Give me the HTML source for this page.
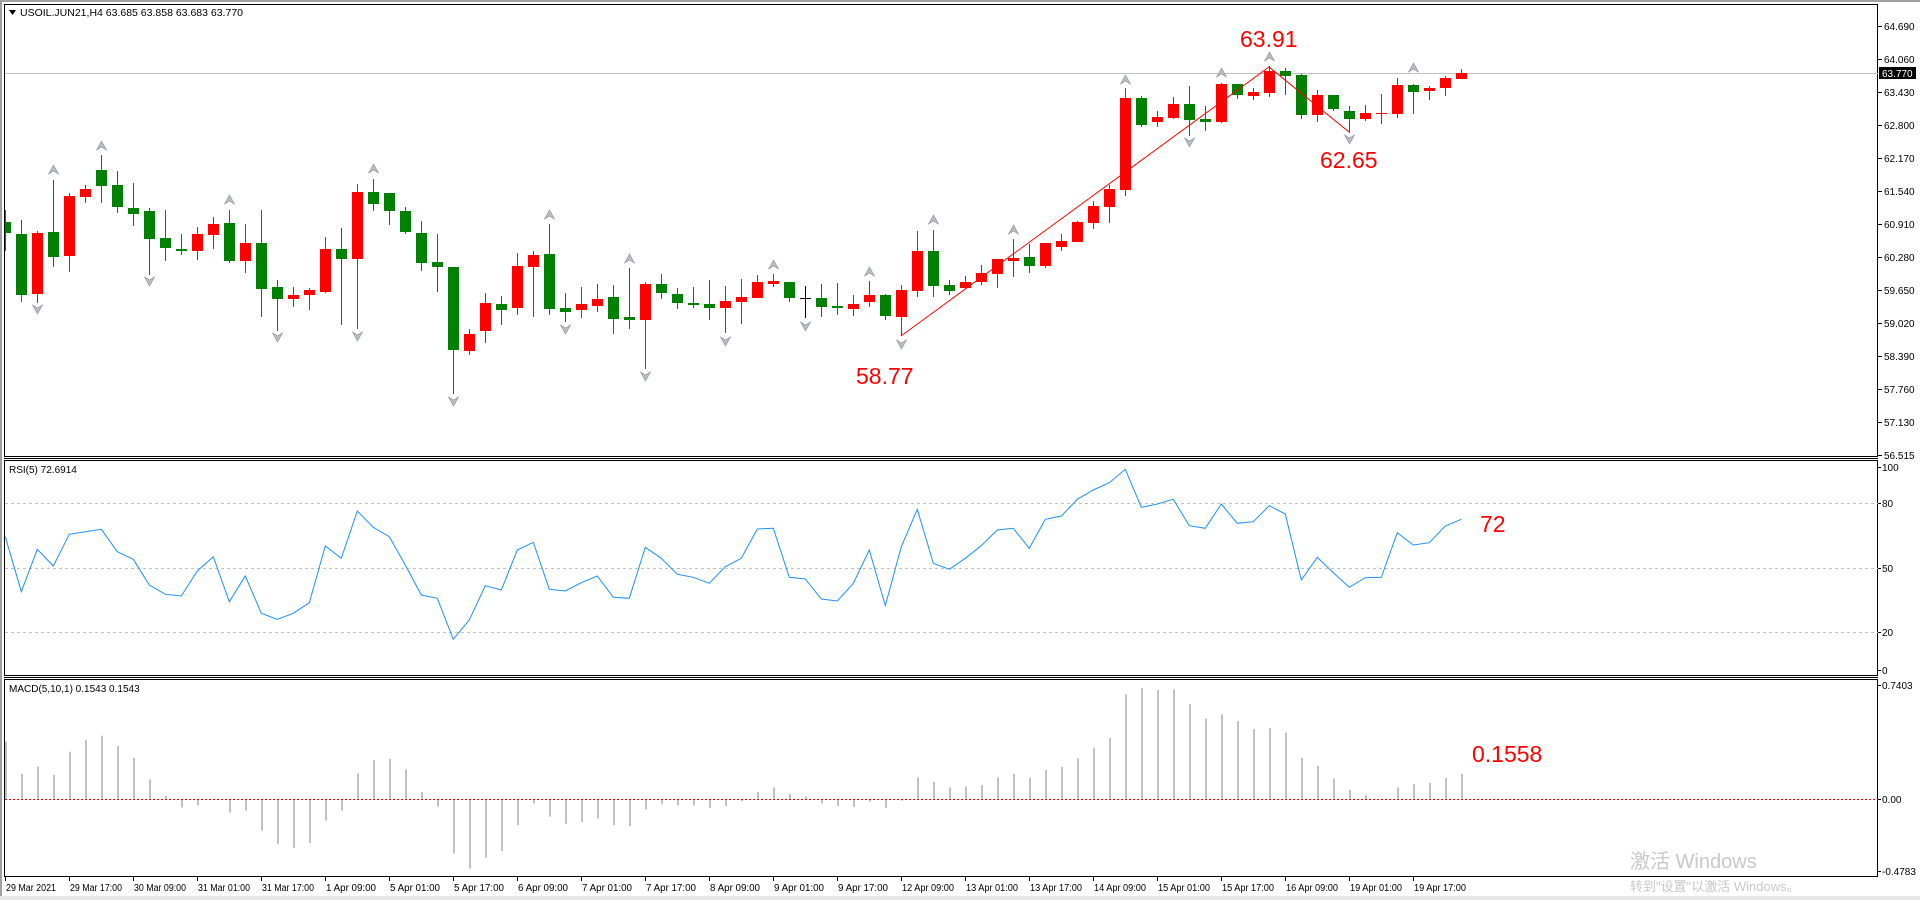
<!DOCTYPE html>
<html><head><meta charset="utf-8"><style>
html,body{margin:0;padding:0;background:#fff;width:1920px;height:900px;overflow:hidden}
svg{display:block}
text{font-family:"Liberation Sans","Noto Sans CJK SC",sans-serif}
</style></head><body>
<svg id="s" width="1920" height="900" viewBox="0 0 1920 900" xmlns="http://www.w3.org/2000/svg">
<rect x="0" y="0" width="1920" height="900" fill="#fff"/>
<rect x="0" y="0" width="1920" height="2" fill="#a0a0a0"/>
<rect x="0" y="0" width="2" height="900" fill="#a0a0a0"/>
<rect x="0" y="896" width="1920" height="4" fill="#e6e6e6"/>
<!-- main frame -->
<rect x="4.5" y="4.5" width="1873" height="452" fill="none" stroke="#000" stroke-width="1"/>
<line x1="4" y1="458.5" x2="1878" y2="458.5" stroke="#000"/>
<rect x="4.5" y="460.5" width="1873" height="215" fill="none" stroke="#000"/>
<line x1="4" y1="677.5" x2="1878" y2="677.5" stroke="#000"/>
<rect x="4.5" y="679.5" width="1873" height="197" fill="none" stroke="#000"/>
<g id="g"></g>
<!-- title -->
<polygon points="9,10 16,10 12.5,15" fill="#000"/>
<text x="20" y="16" font-size="10.5" fill="#000">USOIL.JUN21,H4  63.685 63.858 63.683 63.770</text>
<text x="9" y="473" font-size="10" fill="#000">RSI(5) 72.6914</text>
<text x="9" y="692" font-size="10" fill="#000">MACD(5,10,1) 0.1543 0.1543</text>
<!-- big labels -->
<g fill="#ff0000" font-size="23">
<text x="1240" y="47">63.91</text>
<text x="1320" y="168">62.65</text>
<text x="856" y="384">58.77</text>
<text x="1480" y="532">72</text>
<text x="1472" y="762">0.1558</text>
</g>
<!-- watermark -->
<text x="1630" y="868" font-size="20" fill="#c8c8c8">激活 Windows</text>
<text x="1630" y="891" font-size="13" fill="#c8c8c8">转到"设置"以激活 Windows。</text>
</svg>
<script>
var NS="http://www.w3.org/2000/svg",g=document.getElementById("g");
function el(n,a,t){var e=document.createElementNS(NS,n);for(var k in a)e.setAttribute(k,a[k]);if(t!==undefined)e.textContent=t;g.appendChild(e);return e;}
function X(k){return 5.3+16*k;}
// price line
el("line",{x1:5,y1:73.5,x2:1878,y2:73.5,stroke:"#c0c0c0"});
// price axis
var pl=["64.690","64.060","63.430","62.800","62.170","61.540","60.910","60.280","59.650","59.020","58.390","57.760","57.130","56.515"];
for(var i=0;i<pl.length;i++){var y=26+33*i;if(i==13)y=455;
el("line",{x1:1878,y1:y+0.5,x2:1882,y2:y+0.5,stroke:"#000"});
el("text",{x:1884,y:y+4,"font-size":"10",fill:"#000"},pl[i]);}
el("rect",{x:1879,y:67,width:37,height:12,fill:"#000"});
el("text",{x:1882,y:77,"font-size":"10",fill:"#fff"},"63.770");
// RSI axis
[[100,467],[80,503],[50,568],[20,632],[0,670]].forEach(function(a){el("text",{x:1882,y:a[1]+4,"font-size":"10",fill:"#000"},a[0]);el("line",{x1:1878,y1:a[1]+.5,x2:1881,y2:a[1]+.5,stroke:"#000"});});
[503,568,632].forEach(function(y){el("line",{x1:5,y1:y+.5,x2:1878,y2:y+.5,stroke:"#c0c0c0","stroke-dasharray":"3,3"});});
// MACD axis
[["0.7403",685],["0.00",799],["-0.4783",871]].forEach(function(a){el("text",{x:1882,y:a[1]+4,"font-size":"10",fill:"#000"},a[0]);el("line",{x1:1878,y1:a[1]+.5,x2:1881,y2:a[1]+.5,stroke:"#000"});});
// candles [k,wt,bt,bb,wb,c]
var C=[[0,210,222,233,251,"g"],[1,220,234,295,302,"g"],[2,231,233,294,303,"r"],[3,180,232,257,267,"g"],[4,193,196,256,272,"r"],[5,185,189,197,203,"r"],[6,155,170,186,203,"g"],[7,171,185,207,213,"g"],[8,183,208,214,226,"g"],[9,208,211,239,275,"g"],[10,210,238,248,261,"g"],[11,234,249,251,255,"g"],[12,227,234,251,260,"r"],[13,217,224,235,249,"r"],[14,210,223,261,263,"g"],[15,224,243,261,273,"r"],[16,210,243,289,317,"g"],[17,280,287,299,331,"g"],[18,287,295,299,307,"r"],[19,288,290,295,310,"r"],[20,237,249,292,293,"r"],[21,228,249,259,325,"g"],[22,184,192,259,329,"r"],[23,179,192,204,211,"g"],[24,193,193,211,225,"g"],[25,207,211,232,234,"g"],[26,221,233,263,271,"g"],[27,234,262,267,292,"g"],[28,267,267,350,394,"g"],[29,329,334,351,355,"r"],
[30,293,303,331,343,"r"],[31,296,304,310,325,"g"],[32,253,266,308,315,"r"],[33,251,255,267,317,"r"],[34,224,254,309,315,"g"],[35,293,308,312,322,"g"],[36,287,304,310,318,"r"],[37,284,299,306,312,"r"],[38,285,297,319,334,"g"],[39,268,317,320,329,"g"],[40,282,284,320,369,"r"],[41,274,284,293,299,"g"],[42,288,294,303,309,"g"],[43,287,303,305,308,"g"],[44,280,304,308,320,"g"],[45,286,301,308,333,"r"],[46,279,297,302,324,"r"],[47,275,282,298,298,"r"],[48,274,281,284,287,"r"],[49,282,282,298,302,"g"],[50,286,298,299,318,"k"],[51,284,298,307,317,"g"],[52,283,306,308,315,"g"],[53,295,304,309,316,"r"],[54,281,295,302,307,"r"],[55,294,295,316,320,"g"],[56,285,290,317,336,"r"],[57,231,251,291,297,"r"],[58,230,251,286,297,"g"],[59,280,285,291,295,"g"],
[60,276,282,288,289,"r"],[61,265,273,282,285,"r"],[62,259,259,274,288,"r"],[63,239,258,261,277,"r"],[64,244,257,266,273,"g"],[65,243,243,266,268,"r"],[66,234,241,247,251,"r"],[67,221,222,242,242,"r"],[68,201,206,223,229,"r"],[69,185,189,207,223,"r"],[70,88,98,190,196,"r"],[71,96,98,125,127,"g"],[72,111,117,122,127,"r"],[73,97,104,118,119,"r"],[74,86,104,120,136,"g"],[75,106,119,122,131,"g"],[76,83,84,122,123,"r"],[77,84,84,95,99,"g"],[78,88,92,96,100,"r"],[79,66,71,93,97,"r"],[80,68,71,76,95,"g"],[81,74,75,115,119,"g"],[82,90,95,115,122,"r"],[83,95,95,109,111,"g"],[84,106,111,119,133,"g"],[85,105,113,119,121,"r"],[86,94,113,114,124,"r"],[87,78,85,114,118,"r"],[88,84,85,92,114,"g"],[89,86,88,91,100,"r"],[90,76,78,88,96,"r"],[91,69,73,79,79,"r"]];
var col={r:"#ff0000",g:"#008000",k:"#000000"};
C.forEach(function(c){var x=Math.round(X(c[0]));var f=col[c[5]];
el("rect",{x:x,y:c[1],width:1,height:c[4]-c[1],fill:f});
var bx=x-5;var bw=11;if(bx<5){bw-=5-bx;bx=5;}
el("rect",{x:bx,y:c[2],width:bw,height:Math.max(1,c[3]-c[2]),fill:f});});
// zigzag
el("polyline",{points:"901,336 1269,67 1349,132",fill:"none",stroke:"#ff0000","stroke-width":"1"});
// fractals
function arr(k,y,up){var x=Math.round(X(k))+0.5;var p=up?[x+","+y,(x-5)+","+(y+9),x+","+(y+6),(x+5)+","+(y+9)]:[x+","+(y+9),(x-5)+","+y,x+","+(y+3),(x+5)+","+y];
el("polygon",{points:p.join(" "),fill:"#b8bcc4",stroke:"#8a8e96","stroke-width":"0.6"});}
[[3,165],[6,141],[14,195],[23,164],[34,210],[39,254],[48,260],[54,267],[58,215],[63,225],[70,75],[76,68],[79,52],[88,63]].forEach(function(a){arr(a[0],a[1],true);});
[[2,305],[9,277],[17,333],[22,332],[28,397],[35,325],[40,372],[45,337],[50,322],[56,340],[74,138],[84,135]].forEach(function(a){arr(a[0],a[1],false);});
// RSI
var R=[290,455,328,378,283,275,268,335,358,435,463,468,393,350,485,408,520,538,520,488,318,355,213,262,290,375,465,475,598,540,437,450,330,307,448,453,428,408,472,475,322,355,403,412,430,380,355,267,265,412,417,477,483,430,330,497,320,208,370,388,355,317,270,265,325,238,228,178,150,128,88,202,192,178,257,265,192,250,245,197,222,420,352,398,442,413,412,278,315,308,258,238];
var pts=R.map(function(v,k){return X(k).toFixed(1)+","+(v/3+440).toFixed(1);});
el("polyline",{points:pts.join(" "),fill:"none",stroke:"#1e90ff","stroke-width":"1"});
// MACD
var M=[215,312,290,315,245,210,197,228,264,328,378,412,405,390,428,422,482,522,533,519,452,422,310,270,267,298,366,410,550,596,563,543,465,400,440,461,456,445,465,468,418,401,405,406,413,408,393,366,352,372,380,400,408,411,395,413,392,322,336,352,350,345,322,312,323,300,291,265,235,204,73,54,60,58,102,146,133,153,177,175,188,264,288,326,360,375,385,352,343,339,324,312];
M.forEach(function(v,k){var y=v/3+670;var x=Math.round(X(k));var y0=799;el("rect",{x:x,y:Math.min(y,y0),width:2,height:Math.max(1,Math.abs(y-y0)),fill:"#c0c0c0"});});
el("line",{x1:5,y1:799.5,x2:1878,y2:799.5,stroke:"#ff0000","stroke-dasharray":"2,2"});
// time axis
var T=["29 Mar 2021","29 Mar 17:00","30 Mar 09:00","31 Mar 01:00","31 Mar 17:00","1 Apr 09:00","5 Apr 01:00","5 Apr 17:00","6 Apr 09:00","7 Apr 01:00","7 Apr 17:00","8 Apr 09:00","9 Apr 01:00","9 Apr 17:00","12 Apr 09:00","13 Apr 01:00","13 Apr 17:00","14 Apr 09:00","15 Apr 01:00","15 Apr 17:00","16 Apr 09:00","19 Apr 01:00","19 Apr 17:00"];
T.forEach(function(t,i){var x=5+64*i;el("line",{x1:x+.5,y1:877,x2:x+.5,y2:881,stroke:"#000"});
el("text",{x:x+1,y:891,"font-size":"10",fill:"#000",textLength:t.length>11?52:(t.length>10?50:46),lengthAdjust:"spacingAndGlyphs"},t);});
</script>
</body></html>
